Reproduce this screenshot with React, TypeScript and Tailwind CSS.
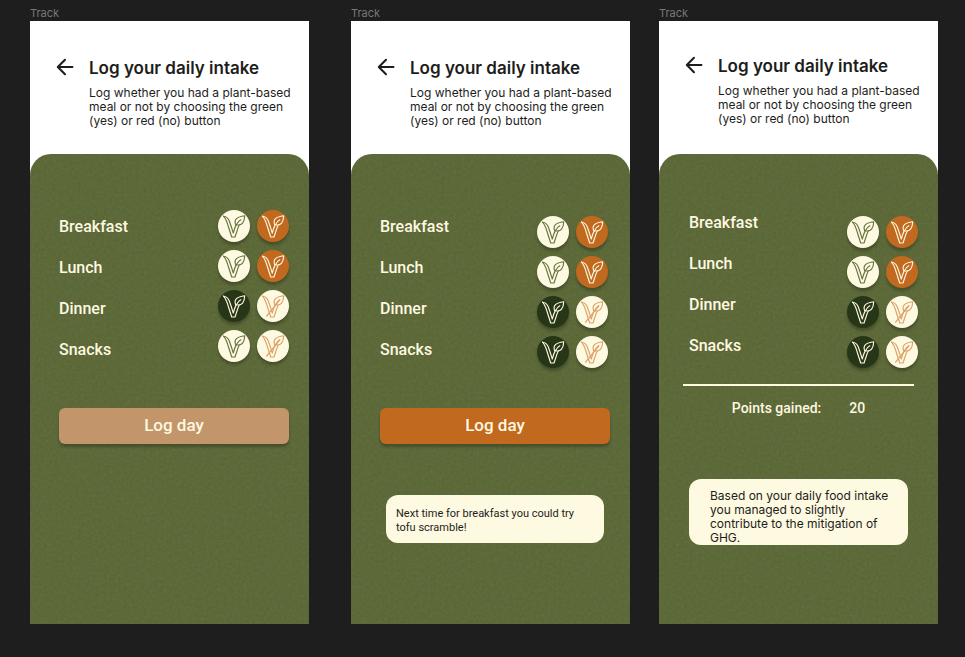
import type { ReactNode } from "react";

type Tone = "creamGreen" | "orange" | "dark" | "creamOrange";
type Meal = { name: string; answer: "yes" | "no" | "none" };

const tones: Record<Tone, string> = {
  creamGreen: "bg-[#fef9e1] text-[#66733f]",
  orange: "bg-[#c1691e] text-[#fef9e1]",
  dark: "bg-[#283618] text-[#fef9e1]",
  creamOrange: "bg-[#fef9e1] text-[#dda068]",
};

function VeganMark({ slashed }: { slashed: boolean }) {
  return (
    <svg viewBox="0 0 32 32" className="size-8" fill="none" stroke="currentColor" strokeWidth="1.15" strokeLinejoin="round" strokeLinecap="round" aria-hidden="true">
      <path d="M5.6 6.2C8.4 6.4 10.2 8.2 11.3 11C12.7 14.6 13.9 18.6 15.3 23C16.3 19.4 17 16.6 18.6 14.4C19.6 12.4 20.8 11 22.8 9.8" />
      <path d="M5.6 6.2C8.2 9.2 9.3 12.8 10.5 17L13.7 27H17L20.2 17.4C20.6 16.4 20.9 15.6 21.4 15" />
      <path d="M17.6 14.6C15.7 9.4 19 6.8 26.7 5.8C26.6 11.8 24 16.2 18.4 14.7" />
      {slashed && <path d="M9.6 26.2L22.8 9.8" />}
    </svg>
  );
}

function BackArrow() {
  return (
    <svg viewBox="0 0 24 24" className="size-6" fill="none" stroke="currentColor" strokeWidth="2" strokeLinejoin="round" strokeLinecap="round" aria-hidden="true">
      <path d="M19.5 12H5M12 4.7L4.8 12L12 19.3" />
    </svg>
  );
}

function Choice({ label, tone, pressed }: { label: string; tone: Tone; pressed: boolean }) {
  return (
    <button
      type="button"
      aria-label={label}
      aria-pressed={pressed}
      className={`size-8 rounded-full shadow-[0_3px_3px_rgba(0,0,0,0.25)] ${tones[tone]}`}
    >
      <VeganMark slashed={tone === "creamOrange"} />
    </button>
  );
}

function Header({ className }: { className: string }) {
  return (
    <header className={`flex h-[154px] gap-3 bg-white pl-[23px] text-[#1d1d1b] ${className}`}>
      <button type="button" aria-label="Back" className="-mt-px h-6 shrink-0">
        <BackArrow />
      </button>
      <div>
        <h2 className="font-['Inter',sans-serif] text-[17px] leading-6 font-semibold whitespace-nowrap">Log your daily intake</h2>
        <p className="mt-1.5 w-[208px] font-['Inter',sans-serif] text-xs leading-[14px]">
          Log whether you had a plant-based meal or not by choosing the green (yes) or red (no) button
        </p>
      </div>
    </header>
  );
}

function Grain() {
  return (
    <svg className="absolute inset-0 size-full opacity-10" aria-hidden="true">
      <filter id="grain">
        <feTurbulence type="fractalNoise" baseFrequency="0.35" numOctaves="3" stitchTiles="stitch" />
        <feColorMatrix type="saturate" values="0" />
      </filter>
      <rect width="100%" height="100%" filter="url(#grain)" />
    </svg>
  );
}

function MealLog({ meals, className, choiceClass }: { meals: Meal[]; className: string; choiceClass: string }) {
  return (
    <div className={`flex items-start justify-between ${className}`}>
      <ul className="font-['Roboto',sans-serif] text-base leading-[41px] font-medium">
        {meals.map((meal) => (
          <li key={meal.name}>{meal.name}</li>
        ))}
      </ul>
      <div className={`grid gap-2 ${choiceClass}`}>
        {meals.map(({ name, answer }) => (
          <div key={name} className="flex gap-[7px]">
            <Choice label={`${name}: yes`} tone={answer === "yes" ? "dark" : "creamGreen"} pressed={answer === "yes"} />
            <Choice label={`${name}: no`} tone={answer === "no" ? "orange" : "creamOrange"} pressed={answer === "no"} />
          </div>
        ))}
      </div>
    </div>
  );
}

function Screen({ headerClass, children }: { headerClass: string; children: ReactNode }) {
  return (
    <section className="flex min-w-0 flex-1 flex-col">
      <h1 className="font-['Inter',sans-serif] text-[11px] leading-[15px] text-[#777777]">Track</h1>
      <div className="flex flex-1 flex-col bg-white">
        <Header className={headerClass} />
        <div className="relative -mt-[21px] flex-1 overflow-hidden rounded-t-[21px] bg-[#586532] text-[#fef9e1]">
          <Grain />
          <div className="relative">{children}</div>
        </div>
      </div>
    </section>
  );
}

function LogButton({ className }: { className: string }) {
  return (
    <div className="pr-5 pl-[29px]">
      <button
        type="button"
        className={`block h-9 w-full rounded-md font-['Roboto',sans-serif] text-[17px] font-medium shadow-[0_3px_3px_rgba(0,0,0,0.25)] ${className}`}
      >
        Log day
      </button>
    </div>
  );
}

const inProgress: Meal[] = [
  { name: "Breakfast", answer: "no" },
  { name: "Lunch", answer: "no" },
  { name: "Dinner", answer: "yes" },
  { name: "Snacks", answer: "none" },
];

const complete: Meal[] = [...inProgress.slice(0, 3), { name: "Snacks", answer: "yes" }];

export default function App() {
  return (
    <main className="flex min-h-screen bg-[#1e1e1e] pt-1.5 pr-[27px] pb-[33px] pl-[30px]">
      <Screen headerClass="pt-[35px]">
        <MealLog meals={inProgress} className="h-[254px] pt-[52px] pr-5 pl-[29px]" choiceClass="pt-1" />
        <LogButton className="bg-[#c3956b]" />
      </Screen>
      <div className="w-[42px] shrink-0" />
      <Screen headerClass="pt-[35px]">
        <MealLog meals={complete} className="h-[254px] pt-[52px] pr-[22px] pl-[29px]" choiceClass="pt-2.5" />
        <LogButton className="bg-[#c1691e]" />
        <p className="mt-[51px] mr-[26px] ml-[35px] rounded-xl bg-[#fef9e1] pt-3 pr-5 pb-2 pl-2.5 font-['Roboto',sans-serif] text-[11px] leading-[14px] text-[#1d1d1b]">
          Next time for breakfast you could try tofu scramble!
        </p>
      </Screen>
      <div className="w-[29px] shrink-0" />
      <Screen headerClass="pt-[33px]">
        <MealLog meals={complete} className="h-[230px] pt-12 pr-5 pl-[30px]" choiceClass="pt-3.5" />
        <hr className="mx-6 border-t-2 border-[#fef9e1]" />
        <dl className="mt-3 flex justify-center gap-7 font-['Roboto',sans-serif] text-sm leading-5 font-medium">
          <dt>Points gained:</dt>
          <dd>20</dd>
        </dl>
        <p className="mx-[30px] mt-[61px] rounded-xl bg-[#fef9e1] pt-2.5 pr-3 pl-[21px] font-['Inter',sans-serif] text-xs leading-[14px] text-[#1d1d1b]">
          Based on your daily food intake you managed to slightly contribute to the mitigation of GHG.
        </p>
      </Screen>
    </main>
  );
}
